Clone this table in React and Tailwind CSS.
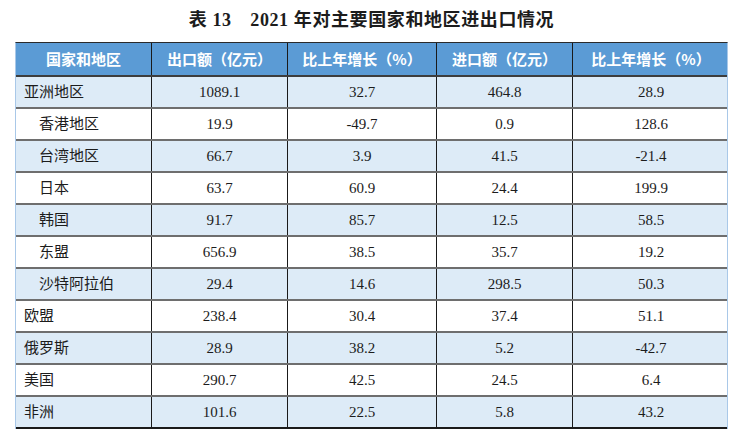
import React from "react";

const rows = [
  { name: "亚洲地区", sub: false, ex: "1089.1", exg: "32.7", im: "464.8", img: "28.9" },
  { name: "香港地区", sub: true, ex: "19.9", exg: "-49.7", im: "0.9", img: "128.6" },
  { name: "台湾地区", sub: true, ex: "66.7", exg: "3.9", im: "41.5", img: "-21.4" },
  { name: "日本", sub: true, ex: "63.7", exg: "60.9", im: "24.4", img: "199.9" },
  { name: "韩国", sub: true, ex: "91.7", exg: "85.7", im: "12.5", img: "58.5" },
  { name: "东盟", sub: true, ex: "656.9", exg: "38.5", im: "35.7", img: "19.2" },
  { name: "沙特阿拉伯", sub: true, ex: "29.4", exg: "14.6", im: "298.5", img: "50.3" },
  { name: "欧盟", sub: false, ex: "238.4", exg: "30.4", im: "37.4", img: "51.1" },
  { name: "俄罗斯", sub: false, ex: "28.9", exg: "38.2", im: "5.2", img: "-42.7" },
  { name: "美国", sub: false, ex: "290.7", exg: "42.5", im: "24.5", img: "6.4" },
  { name: "非洲", sub: false, ex: "101.6", exg: "22.5", im: "5.8", img: "43.2" },
];

const headers = ["国家和地区", "出口额（亿元）", "比上年增长（%）", "进口额（亿元）", "比上年增长（%）"];

const cols = "grid grid-cols-[136px_136px_149px_136px_156px]";

export default function App() {
  return (
    <div className="w-[749px] h-[443px] bg-white text-[#1c1c1c] font-['Liberation_Serif','Noto_Sans_CJK_SC',serif]">
      <div className="h-[42px] w-[713px] ml-[15px] flex items-center justify-center pb-[2px]">
        <h1 className="text-[18px] font-bold tracking-[0.6px] font-['Liberation_Serif','Noto_Sans_CJK_SC',serif]">
          表 13　2021 年对主要国家和地区进出口情况
        </h1>
      </div>

      <div className="ml-[15px] w-[713px] border-t border-t-[#2a2a2a] border-x border-x-[#a9c8e8]">
        <div className={`${cols} h-[34px] bg-[#5b9bd5] border-b-2 border-b-[#3d3d3d]`}>
          {headers.map((h, i) => (
            <div
              key={i}
              className={`flex items-center justify-center text-white text-[15px] font-bold font-['Noto_Sans_CJK_SC',sans-serif] ${
                i < 4 ? "border-r border-r-[#1a1a1a]" : ""
              }`}
            >
              {h}
            </div>
          ))}
        </div>

        {rows.map((r, idx) => (
          <div
            key={r.name}
            className={`${cols} h-[32px] border-b-2 ${
              idx === rows.length - 1 ? "border-b-[#1a1a1a]" : "border-b-[#6e6e6e]"
            } ${idx % 2 === 0 ? "bg-[#ddebf7]" : "bg-white"}`}
          >
            <div
              className={`flex items-center text-[15px] border-r border-r-[#1a1a1a] ${
                r.sub ? "pl-[23px]" : "pl-[8px]"
              }`}
            >
              {r.name}
            </div>
            <div className="flex items-center justify-center text-[15px] border-r border-r-[#1a1a1a]">{r.ex}</div>
            <div className="flex items-center justify-center text-[15px] border-r border-r-[#1a1a1a]">{r.exg}</div>
            <div className="flex items-center justify-center text-[15px] border-r border-r-[#1a1a1a]">{r.im}</div>
            <div className="flex items-center justify-center text-[15px]">{r.img}</div>
          </div>
        ))}
      </div>
    </div>
  );
}
